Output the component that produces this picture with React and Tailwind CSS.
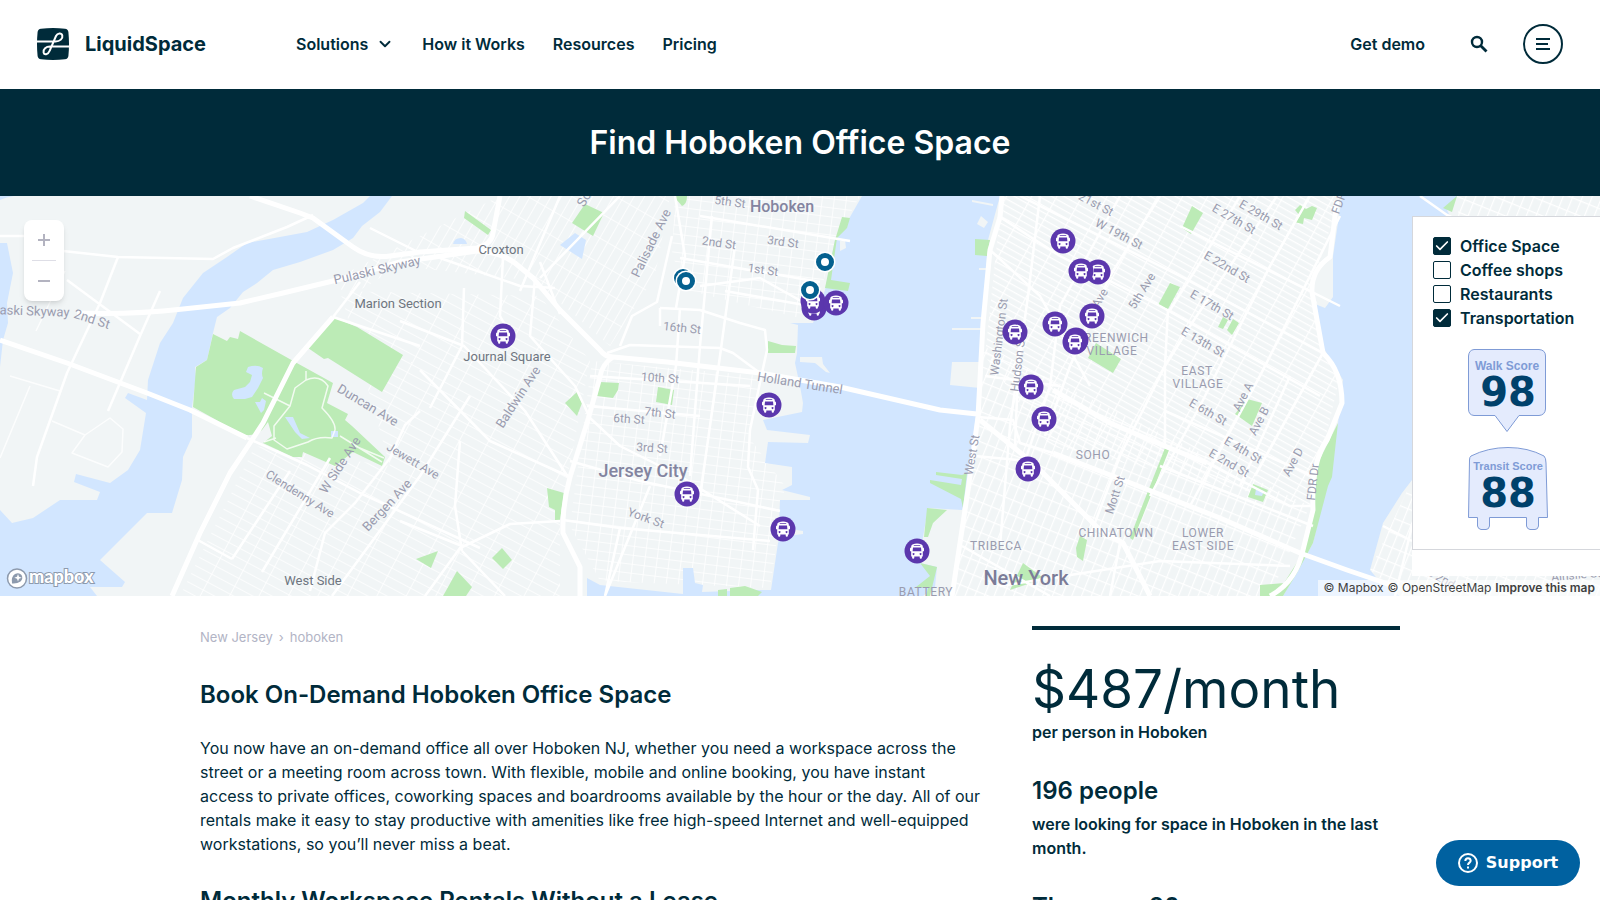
import React, { useState } from "react";
import { ChevronDown, Check } from "lucide-react";

const navLinks = ["How it Works", "Resources", "Pricing"];

const water = [
  "M363 7 370 0H392L380 16 362 30 353 42 333 54 300 66 273 74 257 87 243 96 230 112 217 121 213 137 207 164 195 171 196 181 192 211 192 241 183 261 182 284 172 317 147 317 100 364 125 386 122 391 90 391 97 400H0V314L12 327 33 322 60 304 97 304 100 296 74 286 76 278 110 287 128 274 140 254 146 217 125 202 128 197 147 204 148 184 160 147 173 127 183 102 203 77 227 61 247 47 307 36 333 24Z",
  "M0 47H7L13 77 7 107 8 127 3 144 0 171Z",
  "M862 0H1000L988 44 983 127 982 166 952 166 950 189 980 192 975 227 970 277 962 314 928 312 923 341 920 367 937 371 935 391 923 400H587L587 382 600 389 683 398 683 372 693 372 695 387 703 389 702 396 760 394 771 394 778 347 780 341 803 338 803 335 779 331 780 304 810 304 810 301 782 294 792 289 792 271 765 267 768 246 808 247 810 239 767 234 763 224 802 216 803 207 800 190 795 167 797 157 798 129 790 127 813 127 825 94 835 44 850 21Z",
  "M1342 0H1457L1447 14 1470 60 1470 200 1412 284 1402 297 1383 327 1370 374 1380 386 1400 400H1283L1313 347 1328 281 1338 227 1343 184 1323 151 1315 108 1325 112 1333 101 1333 60Z",
  "M575 37 586 44 582 63 560 49Z",
  "M453 48Q454 42 461 42 466 43 467 48Z",
  "M0 0H14Q6 1 0 4Z",
];

const ponds = [
  "M248 171Q257 168 263 172 261 178 263 182L258 192 252 201 245 203 234 203Q230 198 234 194L245 191 250 186 252 179 246 176Z",
  "M255 206 260 206 262 202 266 205 264 214 261 217Z",
  "M285 221 293 221 300 237 310 242 302 243 295 236Z",
  "M331 235h7v6h-7z",
  "M1256 293 1264 295 1262 300 1255 299Z",
];

const parks = [
  "M213 138 227 145 230 141 238 143 240 135 295 166 333 187 327 207 348 218 345 224 352 230 385 261 382 270 353 256 335 270 303 256 302 261 293 261 263 247 272 240 268 226 262 234Q255 240 245 239L220 226 193 211 196 171 207 164Z",
  "M333 121 357 131 403 159 382 196 328 162 324 163 308 152Z",
  "M585 8 604 17 593 40 572 27Z",
  "M465 15 491 34 488 39 464 22Z",
  "M675 0H687Q687 8 682 10L676 3Z",
  "M600 186 619 187 618 194 613 202 597 200Z",
  "M658 191 674 194 672 209 656 206Z",
  "M577 196 582 207 577 220 565 207Z",
  "M547 292 564 297 560 324 555 324 555 314 549 311Z",
  "M502 352 512 364 503 373 492 362Z",
  "M438 355 431 372 416 363Z",
  "M457 375 472 391 466 400H443Z",
  "M768 145 782 149 796 150 795 157H768Z",
  "M718 394 727 393 727 400H718ZM730 392 745 390 762 396 758 400H730Z",
  "M927 312 947 314 933 327 928 341 924 341Z",
  "M920 367 937 371 930 400H926L928 392 916 391 930 380Z",
  "M936 276 962 279 967 277 963 312 961 303 930 287 930 284 961 289 962 283 936 279Z",
  "M975 43 990 44 987 60 975 59Z",
  "M842 21 850 22 847 32 837 42 831 84 850 87 848 95 825 92 835 44Z",
  "M1096 147 1121 163 1113 177 1088 162Z",
  "M1170 87 1180 91 1168 113 1158 109Z",
  "M1192 10 1203 17 1191 38 1182 32Z",
  "M1165 252 1169 254 1142 322 1133 344 1130 342 1139 318Z",
  "M1080 340 1087 344 1083 365 1077 361 1076 352Z",
  "M1023 367 1042 381 1028 388 1010 394Z",
  "M1338 227 1332 281 1328 290 1313 347 1297 377 1283 400H1260V389L1284 387 1303 357 1313 317 1318 267Z",
  "M1295 14 1300 9 1306 13 1312 10 1317 12 1312 24 1304 22 1303 28 1294 26 1300 20Z",
  "M1247 203 1262 207 1252 230 1235 218Z",
  "M1253 288 1268 294 1263 306 1248 301Z",
  "M1223 121 1228 124 1223 133 1218 131ZM1233 123 1239 127 1232 139 1227 134Z",
  "M1457 0 1452 16 1443 12Z",
];

const bigRoads = [
  "M77 117Q130 119 183 113L240 107 283 97 337 84 400 66 477 55",
  "M250 0 300 17 313 22 353 51Q370 63 390 60L420 56 477 52Q492 48 493 37L500 0",
  "M0 144 67 167 147 197 190 214 247 242",
  "M333 121 293 167 263 227 250 247 230 277 200 337 172 400",
  "M477 55Q500 56 515 67L533 82 560 114 600 154Q605 161 613 161L667 166 760 177 800 184 840 191 940 214 977 218",
  "M613 161Q602 168 600 181L587 227 570 281Q562 310 563 337L580 371 580 400",
  "M1002 0 1000 21 990 54 983 127 978 221 968 294 952 400",
  "M1337 4 1330 61Q1311 74 1312 96L1323 157Q1342 175 1342 207L1327 244Q1311 266 1313 314L1303 354Q1296 386 1270 400",
  "M1053 194 1110 227 1167 251 1207 267",
  "M1053 257 1123 284 1220 322 1300 357 1347 374 1400 392",
  "M980 224 1033 267 1100 334 1123 347 1150 400",
];

const roads = [
  "M63 55 118 61 213 63 233 52 287 31 313 19",
  "M118 61 100 107 67 177 37 261 33 290",
  "M160 95 140 140 108 215",
  "M0 40H24M67 84 140 138",
  "M247 242 307 269 360 297 480 352",
  "M360 86 333 121M333 121 420 150",
  "M420 215 405 229 390 262 355 307 325 337 310 395",
  "M196 343 232 363M232 363 290 275M262 376 330 262M332 400 420 280 470 200",
  "M607 157 630 149 720 152 733 157 760 177",
  "M660 112 700 114 740 127 765 134 767 154 762 177 750 234 748 271 758 294 753 354",
  "M560 0 520 95M620 0 540 82M503 61 500 120 513 143M535 82 530 140 575 190 590 222",
  "M400 125 464 150 525 215 568 281M464 92 462 150 430 212M370 32 420 57",
  "M420 174 490 245 570 281M540 66 560 118M440 62 520 90 555 92",
  "M460 245 455 310 462 355M560 325 510 328 460 352 425 400M563 324 620 332 770 345",
  "M462 355 505 400M400 325 462 350M620 332 605 400M650 290 605 400",
  "M590 222 620 250 680 280 760 330M570 265 640 285 780 315",
  "M712 20 700 150 690 280M735 50 720 160 700 300M675 0 685 60 676 112M700 90 760 82 810 110M725 95 810 110M680 62 820 86M700 20 850 45",
  "M660 112V130M680 112 676 170 660 260M587 210 700 220M590 180 750 190",
  "M620 150 632 120 657 106 672 40",
  "M1170 114 1203 62 1240 0M1120 0 1060 110 1050 190 1020 280",
  "M1160 0 1110 80 1070 170 1045 240M1277 0 1190 130 1165 170 1165 252M1310 0 1270 70 1200 210 1150 300",
  "M1340 20 1260 180 1190 310M1168 113 1165 170 1120 260 1090 340M1323 157 1255 280M1290 180 1240 290",
  "M1000 21 1060 60 1160 110 1320 200M1020 0 1180 80 1323 157M1180 30 1340 110",
  "M990 54 1040 100 1090 190M985 180 1060 190M978 221 1013 224 1020 247 1053 257M975 260 1030 265",
  "M1165 215 1313 280M1160 270 1313 330M1000 390 1160 365 1290 370M962 350 1050 400",
  "M1040 0 1028 100 1010 230 1000 350M1020 130 1015 250M1120 347 1110 400M1207 267 1290 310 1311 310",
  "M1420 0 1447 19 1470 30M1395 400 1412 330M1383 330 1412 345",
];

// fine street meshes, each one clipped to its own district
const districts = [
  { fill: "url(#mesh-jc)", d: "M592 165 760 180 748 240 785 290 770 392 600 385 570 330Z" },
  { fill: "url(#mesh-jc)", d: "M675 0H860L835 44 812 125 690 95 672 60Z" },
  { fill: "url(#mesh-heights)", d: "M500 0H670L655 80 610 150 535 85 400 70 350 100 330 85Z" },
  { fill: "url(#mesh-west)", d: "M340 95 540 100 590 165 560 320 560 400H180L255 250 390 270Z" },
  { fill: "url(#mesh-nyc)", d: "M1002 0H1340L1312 91 1340 180 1310 310 1050 250 985 160Z" },
  { fill: "url(#mesh-soho)", d: "M983 150 1310 310 1270 400H952Z" },
  { fill: "url(#mesh-soho)", d: "M1412 284 1370 374 1400 400H1600V0H1457L1470 200Z" },
];

const labels = [
  ["Pulaski Skyway", 377, 74, -13, "small"],
  ["laski Skyway", 33, 115, 2, "small"],
  ["2nd St", 92, 123, 18, "small"],
  ["Duncan Ave", 368, 209, 31, "small"],
  ["Jewett Ave", 413, 265, 31, "tiny"],
  ["Clendenny Ave", 300, 298, 32, "tiny"],
  ["W Side Ave", 340, 269, -57, "small"],
  ["Bergen Ave", 387, 309, -47, "small"],
  ["Baldwin Ave", 518, 201, -57, "small"],
  ["Palisade Ave", 651, 47, -64, "small"],
  ["So", 584, 3, -60, "small"],
  ["5th St", 730, 6, 8, "tiny"],
  ["2nd St", 719, 47, 8, "tiny"],
  ["3rd St", 783, 46, 8, "tiny"],
  ["1st St", 763, 74, 8, "tiny"],
  ["16th St", 682, 132, 6, "tiny"],
  ["10th St", 660, 182, 4, "tiny"],
  ["7th St", 660, 217, 6, "tiny"],
  ["6th St", 629, 223, 4, "tiny"],
  ["3rd St", 652, 252, 4, "tiny"],
  ["York St", 646, 322, 20, "tiny"],
  ["Holland Tunnel", 800, 187, 9, "small"],
  ["21st St", 1096, 8, 28, "tiny"],
  ["W 19th St", 1119, 38, 28, "tiny"],
  ["5th Ave", 1142, 95, -58, "tiny"],
  ["Ave", 1100, 102, -60, "tiny"],
  ["Washington St", 999, 141, -83, "tiny"],
  ["Hudson St", 1018, 168, -83, "tiny"],
  ["West St", 972, 259, -80, "tiny"],
  ["Mott St", 1115, 299, -72, "tiny"],
  ["E 29th St", 1261, 19, 30, "tiny"],
  ["E 27th St", 1234, 23, 30, "tiny"],
  ["E 22nd St", 1227, 71, 30, "tiny"],
  ["E 17th St", 1212, 109, 30, "tiny"],
  ["E 13th St", 1203, 146, 30, "tiny"],
  ["E 6th St", 1208, 216, 30, "tiny"],
  ["E 4th St", 1243, 254, 30, "tiny"],
  ["E 2nd St", 1229, 267, 30, "tiny"],
  ["Ave A", 1243, 201, -62, "tiny"],
  ["Ave B", 1259, 225, -62, "tiny"],
  ["Ave D", 1293, 266, -62, "tiny"],
  ["FDR Dr", 1313, 286, -84, "tiny"],
  ["FDR", 1339, 7, -70, "tiny"],
  ["S 2nd", 1441, 382, 30, "tiny"],
  ["Ainslie St", 1576, 379, -5, "tiny"],
  ["Marion Section", 398, 107, 0, "place"],
  ["West Side", 313, 384, 0, "place"],
  ["Croxton", 501, 53, 0, "place"],
  ["Journal Square", 507, 160, 0, "place"],
  ["GREENWICH", 1112, 142, 0, "district"],
  ["VILLAGE", 1112, 155, 0, "district"],
  ["SOHO", 1093, 259, 0, "district"],
  ["CHINATOWN", 1116, 337, 0, "district"],
  ["TRIBECA", 996, 350, 0, "district"],
  ["BATTERY", 926, 396, 0, "district"],
  ["EAST", 1197, 175, 0, "district"],
  ["VILLAGE", 1198, 188, 0, "district"],
  ["LOWER", 1203, 337, 0, "district"],
  ["EAST SIDE", 1203, 350, 0, "district"],
  ["Hoboken", 782, 10, 0, "town"],
  ["Jersey City", 643, 274, 0, "city"],
  ["New York", 1026, 382, 0, "metro"],
];

const labelStyles = {
  small: "text-[13px] fill-[#9a9caf]",
  tiny: "text-[12px] fill-[#9a9caf]",
  place: "text-[13px] fill-[#6e7580]",
  district: "text-[12px] fill-[#9a9caf] tracking-wider",
  town: "text-[16px] fill-[#8384a0] font-medium",
  city: "text-[18px] fill-[#8384a0] font-medium",
  metro: "text-[20px] fill-[#7b7c98] font-medium",
};

const stations = [
  [503, 140], [769, 209], [687, 298], [783, 333], [917, 355],
  [814, 112], [813, 105], [836, 107],
  [1063, 45], [1098, 76], [1081, 75],
  [1015, 136], [1055, 128], [1092, 120], [1076, 144], [1075, 146],
  [1031, 191], [1044, 223], [1028, 273],
];

const offices = [[683, 82], [686, 85], [825, 66], [810, 94]];

const BusMarker = ({ x, y }) => (
  <g transform={`translate(${x} ${y})`}>
    <circle r="12.5" fill="#5b37ad" />
    <path
      fill="#fff"
      fillRule="evenodd"
      d="M-4.5-6.6Q0-8.4 4.5-6.6 5.7-6 5.8-4.5V-3.5Q7-3.5 7-2.3V.2H5.8V5.4H4.9V6.8Q4.9 7.8 3.8 7.8 2.7 7.8 2.7 6.8V5.4H-2.7V6.8Q-2.7 7.8-3.8 7.8-4.9 7.8-4.9 6.8V5.4H-5.8V.2H-7V-2.3Q-7-3.5-5.8-3.5V-4.5Q-5.7-6-4.5-6.6ZM-3.2-5.8V-4.9H3.2V-5.8ZM-4-3.4-4.4 .2H4.4L4-3.4ZM-3.5 2a1 1 0 1 0 .1 0ZM3.5 2a1 1 0 1 0 .1 0Z"
    />
  </g>
);

const CityMap = ({ showOffices, showTransport }) => (
  <svg
    className="block h-full w-full font-[Roboto,sans-serif]"
    viewBox="0 0 1600 400"
    preserveAspectRatio="xMidYMid slice"
    role="img"
    aria-label="Map of Hoboken"
  >
    <defs>
      <pattern id="mesh-jc" width="12" height="9" patternUnits="userSpaceOnUse" patternTransform="rotate(7)">
        <path d="M0 0H12M0 0V9" stroke="#fff" strokeWidth="1.6" />
      </pattern>
      <pattern id="mesh-heights" width="9" height="22" patternUnits="userSpaceOnUse" patternTransform="rotate(30)">
        <path d="M0 0H9M0 0V22" stroke="#fff" strokeWidth="1.6" />
      </pattern>
      <pattern id="mesh-west" width="26" height="9" patternUnits="userSpaceOnUse" patternTransform="rotate(28)">
        <path d="M0 0H26M0 0V9" stroke="#fff" strokeWidth="1.6" />
      </pattern>
      <pattern id="mesh-nyc" width="22" height="6" patternUnits="userSpaceOnUse" patternTransform="rotate(29)">
        <path d="M0 0H22M0 0V6" stroke="#fff" strokeWidth="2.4" />
      </pattern>
      <pattern id="mesh-soho" width="9" height="14" patternUnits="userSpaceOnUse" patternTransform="rotate(22)">
        <path d="M0 0H9M0 0V14" stroke="#fff" strokeWidth="2.4" />
      </pattern>
    </defs>
    <rect width="1600" height="400" fill="#f1f5f6" />
    {districts.map((area) => (
      <path key={area.d} d={area.d} fill={area.fill} />
    ))}
    <g fill="#d2e6ff">
      {water.map((d) => (
        <path key={d} d={d} />
      ))}
    </g>
    <g fill="#f1f5f6">
      <path d="M800 161 822 161 823 168 830 177 826 176 815 167 800 166ZM981 20 988 26 984 32 977 28ZM840 45 845 44 846 52 840 55Z" />
      <path d="M972 4 993 8V10L972 6ZM952 132H982V134H952ZM979 72H988V74H979ZM971 121H984V123H971ZM1318 101 1328 107 1326 110 1317 105Z" />
    </g>
    <g fill="#bcebb6">
      {parks.map((d) => (
        <path key={d} d={d} />
      ))}
    </g>
    <g fill="#d2e6ff">
      {ponds.map((d) => (
        <path key={d} d={d} />
      ))}
    </g>
    <g fill="none" stroke="#fff" strokeLinejoin="round">
      <path
        strokeWidth="1.5"
        opacity="0.8"
        d="M306 175V184Q320 178 328 190L322 212Q336 226 335 234L332 242Q318 240 308 246L287 253 274 244V230L290 210 295 192 306 184M264 197 290 210M264 246 276 242M340 240 382 266M355 250 384 262M52 225 85 239 110 222 123 233 122 256 108 271 72 257 85 239M10 180 60 195M30 190 0 262M65 75 36 135"
      />
      {roads.map((d) => (
        <path key={d} d={d} strokeWidth="2.5" />
      ))}
      {bigRoads.map((d) => (
        <path key={d} d={d} strokeWidth="5" />
      ))}
    </g>
    {labels.map(([text, x, y, angle, kind]) => (
      <text
        key={`${text}-${x}`}
        transform={`translate(${x} ${y}) rotate(${angle})`}
        textAnchor="middle"
        dominantBaseline="central"
        className={labelStyles[kind]}
      >
        {text}
      </text>
    ))}
    {showTransport && stations.map(([x, y]) => <BusMarker key={`${x}-${y}`} x={x} y={y} />)}
    {showOffices &&
      offices.map(([x, y]) => (
        <g key={`${x}-${y}`}>
          <circle cx={x} cy={y} r="10.5" fill="#fff" />
          <circle cx={x} cy={y} r="6.5" fill="#fff" stroke="#04608f" strokeWidth="5" />
        </g>
      ))}
  </svg>
);

const Logo = () => (
  <a href="#" className="flex items-center gap-4">
    <svg width="32" height="32" viewBox="0 0 32 32" aria-hidden="true">
      <path d="M4 .7Q16-.6 28 .7 31 1 31.400 4 32.600 16 31.400 28 31 31 28 31.300 16 32.600 4 31.300 1 31 .6 28-.6 16 .6 4 1 1 4 .7Z" fill="#002b3a" />
      <path
        d="M0 13.500H18.500C23 13.500 26 10.500 25.300 7.500C24.500 4.500 20.500 4.800 19 8L12.500 23C11 27 7.200 27.300 6.600 24.500C6 21 9 18.500 13 18.500H32"
        fill="none"
        stroke="#fff"
        strokeWidth="2"
      />
    </svg>
    <span className="text-xl font-bold">LiquidSpace</span>
  </a>
);

const Header = () => (
  <header className="flex h-[89px] items-center bg-white px-[37px] pb-0.5">
    <Logo />
    <nav className="ml-[90px] flex items-center gap-7 text-[16px] font-semibold">
      <button type="button" className="flex cursor-pointer items-center gap-2">
        Solutions
        <ChevronDown size={18} strokeWidth={2.5} />
      </button>
      {navLinks.map((link) => (
        <a key={link} href="#">
          {link}
        </a>
      ))}
    </nav>
    <div className="ml-auto flex items-center">
      <a href="#" className="text-[16px] font-semibold">
        Get demo
      </a>
      <button type="button" aria-label="Search" className="ml-[45px] cursor-pointer">
        <svg width="18" height="18" viewBox="0 0 18 18" fill="none" stroke="currentColor">
          <circle cx="7" cy="7" r="5" strokeWidth="2.400" />
          <path d="M10.500 10.500 16.500 16.500" strokeWidth="2.800" />
        </svg>
      </button>
      <button
        type="button"
        aria-label="Menu"
        className="ml-[35px] flex size-10 cursor-pointer items-center justify-center rounded-full border-2 border-[#002b3a]"
      >
        <svg width="14" height="12" viewBox="0 0 14 12" stroke="currentColor" strokeWidth="2">
          <path d="M0 1H14M0 6H12M0 11H14" />
        </svg>
      </button>
    </div>
  </header>
);

const Option = ({ label, checked, onChange }) => (
  <label className="flex h-6 cursor-pointer items-center gap-[9px] text-[16px] font-semibold">
    <span className="relative flex size-[18px]">
      <input
        type="checkbox"
        checked={checked}
        onChange={onChange}
        className="size-[18px] appearance-none rounded-xs border border-[#002b3a] bg-white checked:bg-[#002b3a]"
      />
      {checked && (
        <Check size={16} strokeWidth={2.5} className="pointer-events-none absolute top-px left-px text-white" />
      )}
    </span>
    {label}
  </label>
);

const WalkScore = () => (
  <svg width="78" height="84" viewBox="0 0 78 84" role="img" aria-label="Walk Score 98">
    <path
      d="M6 .5H71Q77.500 1 77.500 7V60Q77 66 71 66.500H51L39 82.500 27 66.500H6Q.5 66 .5 60V7Q1 1 6 .5Z"
      fill="#e4ebfd"
      stroke="#7f9bd6"
    />
    <text x="39" y="21" textAnchor="middle" className="fill-[#7f9bd6] font-['Liberation_Sans',sans-serif] text-[12px] font-bold">
      Walk Score
    </text>
    <text x="40" y="57" textAnchor="middle" className="fill-[#00416b] font-['DejaVu_Sans',sans-serif] text-[40px] font-bold">
      98
    </text>
  </svg>
);

const TransitScore = () => (
  <svg width="80" height="84" viewBox="0 0 80 84" role="img" aria-label="Transit Score 88">
    <path
      d="M3 9Q20 .5 40 .5T76 9Q78 11 78 16L79.500 70.500H70.500V79Q70 82.500 67 82.500H62Q59 82 58.500 79V70.500H21.500V79Q21 82.500 18 82.500H13Q10 82 9.500 79V70.500H.5L1.500 13Q1.500 10 3 9Z"
      fill="#e4ebfd"
      stroke="#7f9bd6"
    />
    <text x="40" y="23" textAnchor="middle" className="fill-[#7f9bd6] font-['Liberation_Sans',sans-serif] text-[11px] font-bold">
      Transit Score
    </text>
    <text x="40" y="60" textAnchor="middle" className="fill-[#00416b] font-['DejaVu_Sans',sans-serif] text-[40px] font-bold">
      88
    </text>
  </svg>
);

const ZoomControls = () => (
  <div className="absolute top-6 left-6 flex w-10 flex-col items-center rounded-lg bg-white shadow-md">
    <button type="button" aria-label="Zoom in" className="flex h-10 w-10 cursor-pointer items-center justify-center">
      <svg width="12" height="12" viewBox="0 0 12 12" stroke="#b3b3c0" strokeWidth="2">
        <path d="M0 6H12M6 0V12" />
      </svg>
    </button>
    <div className="h-px w-6 bg-[#dedee6]" />
    <button type="button" aria-label="Zoom out" className="flex h-10 w-10 cursor-pointer items-center justify-center">
      <svg width="12" height="12" viewBox="0 0 12 12" stroke="#b3b3c0" strokeWidth="2">
        <path d="M0 6H12" />
      </svg>
    </button>
  </div>
);

const MapboxLogo = () => (
  <a href="#" aria-label="Mapbox" className="absolute bottom-1 left-1.5">
    <svg width="90" height="26" viewBox="0 0 90 26">
      <circle cx="11" cy="12.500" r="9.500" fill="#fff" stroke="#8d9aad" strokeWidth="1.500" />
      <path d="M6 17.500Q5 10.500 9 8 13 6 15.500 9 17.500 12.500 14.500 15.500 11 18 6 17.500Z" fill="#8d9aad" />
      <path d="M12 8 13 10.700 15.700 11.700 13 12.700 12 15.500 11 12.700 8.300 11.700 11 10.700Z" fill="#fff" />
      <text
        x="23"
        y="17"
        fill="#fff"
        stroke="#8d9aad"
        strokeWidth="2"
        className="font-[Lato,sans-serif] text-[18px] font-black [paint-order:stroke]"
      >
        mapbox
      </text>
    </svg>
  </a>
);

const MapSection = () => {
  const [filters, setFilters] = useState({
    "Office Space": true,
    "Coffee shops": false,
    Restaurants: false,
    Transportation: true,
  });

  return (
    <section className="relative h-[400px] overflow-hidden">
      <CityMap showOffices={filters["Office Space"]} showTransport={filters.Transportation} />
      <ZoomControls />
      <MapboxLogo />

      {/* filters and scores */}
      <aside className="absolute top-5 right-0 w-[188px] bg-white pb-[26px]">
        <div className="border border-r-0 border-[#d5d7dc] pt-[17px] pb-[18px] pl-5">
          {Object.keys(filters).map((name) => (
            <Option
              key={name}
              label={name}
              checked={filters[name]}
              onChange={() => setFilters({ ...filters, [name]: !filters[name] })}
            />
          ))}
          <div className="mt-[19px] flex flex-col gap-[14px] pl-[35px]">
            <WalkScore />
            <TransitScore />
          </div>
        </div>
      </aside>

      <div className="absolute right-0 bottom-0 flex h-4 items-center gap-1 bg-white/60 px-[5px] text-[12px] text-[#404040]">
        <a href="#">© Mapbox</a>
        <a href="#">© OpenStreetMap</a>
        <a href="#" className="font-semibold">
          Improve this map
        </a>
      </div>
    </section>
  );
};

export default function App() {
  return (
    <div className="h-screen overflow-hidden bg-white font-[Inter,sans-serif] text-[#002b3a]">
      <Header />
      <div className="flex h-[107px] items-center justify-center bg-[#002b3a]">
        <h1 className="text-[32px] font-semibold text-white">Find Hoboken Office Space</h1>
      </div>
      <MapSection />

      <main className="mx-auto flex max-w-[1200px] gap-12 pt-[30px]">
        <div className="flex-1">
          <nav aria-label="Breadcrumb" className="flex gap-1.5 text-[13px] leading-[22px] text-[#b2b4c5]">
            <a href="#">New Jersey</a>
            <span>›</span>
            <a href="#">hoboken</a>
          </nav>
          <h2 className="mt-8 text-[24px] leading-[30px] font-semibold">Book On-Demand Hoboken Office Space</h2>
          <p className="mt-[26px] text-[16px] leading-6">
            You now have an on-demand office all over Hoboken NJ, whether you need a workspace across the
            <br />
            street or a meeting room across town. With flexible, mobile and online booking, you have instant
            <br />
            access to private offices, coworking spaces and boardrooms available by the hour or the day. All of our
            <br />
            rentals make it easy to stay productive with amenities like free high-speed Internet and well-equipped
            <br />
            workstations, so you’ll never miss a beat.
          </p>
          <h2 className="mt-[30px] text-[24px] leading-[30px] font-semibold">
            Monthly Workspace Rentals Without a Lease
          </h2>
        </div>

        <div className="w-[368px] border-t-4 border-[#002b3a]">
          <p className="mt-7 text-[53px] leading-[62px]">$487/month</p>
          <p className="text-[16px] leading-6 font-semibold">per person in Hoboken</p>
          <h3 className="mt-8 text-[24px] leading-[30px] font-semibold">196 people</h3>
          <p className="mt-1.5 text-[16px] leading-6 font-semibold">
            were looking for space in Hoboken in the last month.
          </p>
          <h3 className="mt-8 text-[24px] leading-[30px] font-semibold">There are 20</h3>
        </div>
      </main>

      <button
        type="button"
        className="fixed right-5 bottom-[14px] flex h-[46px] w-36 cursor-pointer items-center justify-center gap-2 rounded-full bg-[#0061a0] font-['DejaVu_Sans',sans-serif] text-[16px] font-bold text-white"
      >
        <svg width="20" height="20" viewBox="0 0 20 20" fill="none" stroke="currentColor" strokeWidth="2">
          <circle cx="10" cy="10" r="9" />
          <path d="M7.300 8Q7.500 5.300 10 5.300T12.700 7.800C12.700 9.500 10 9.800 10 12M10 13.400V15.400" />
        </svg>
        Support
      </button>
    </div>
  );
}
